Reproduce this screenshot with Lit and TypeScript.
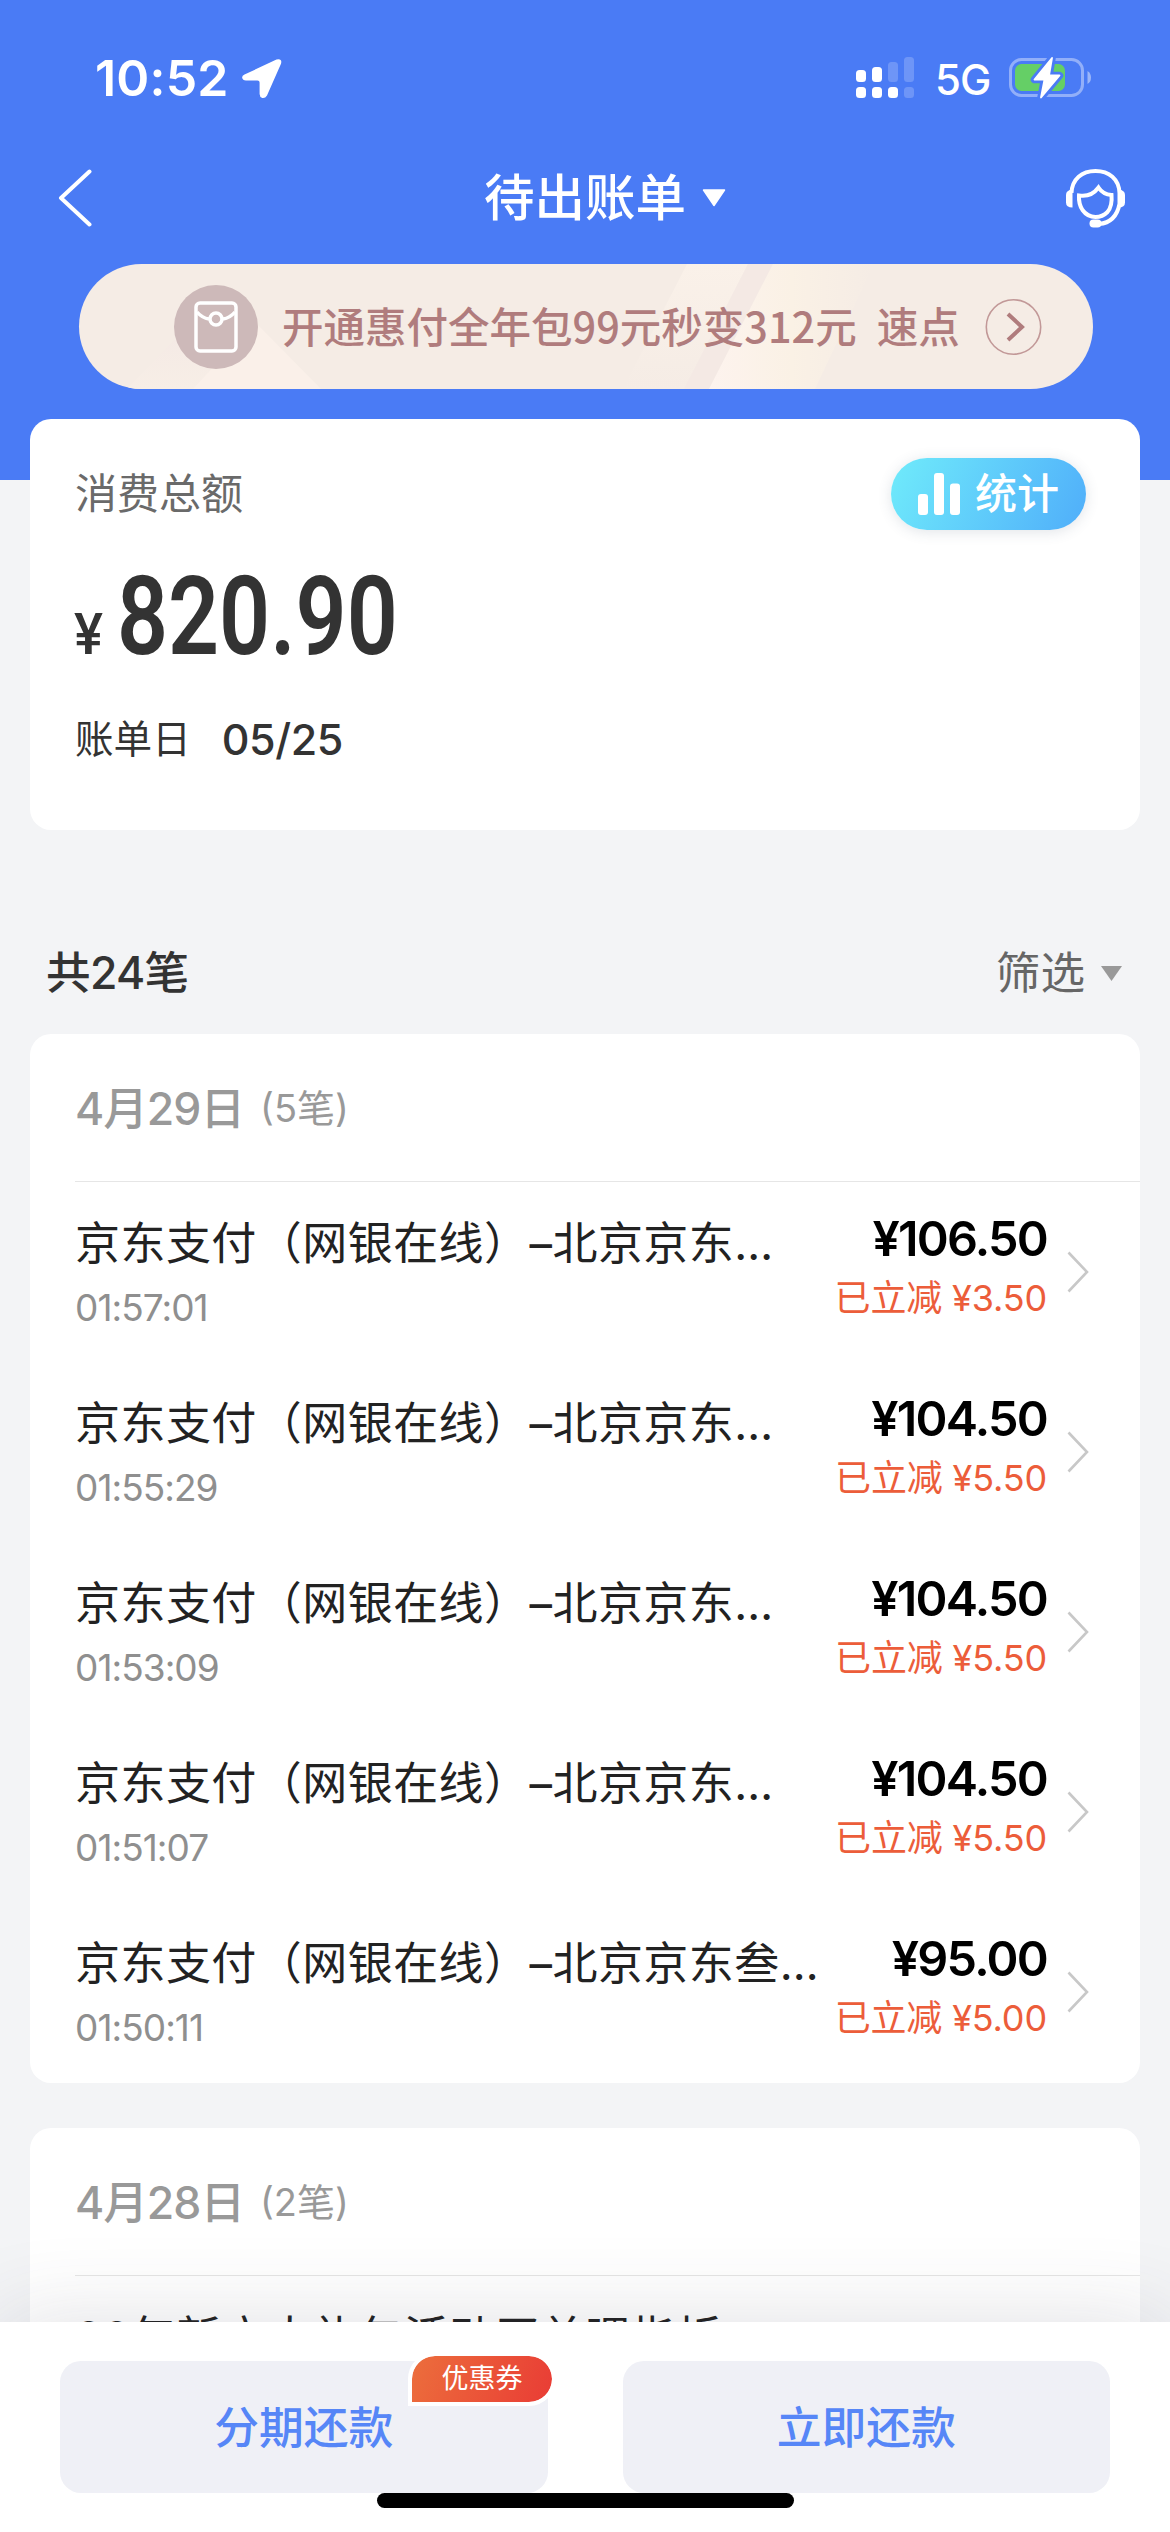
import { LitElement, html, css } from "lit";
import { customElement } from "lit/decorators.js";

interface Bill { title: string; time: string; amount: string; off: string; }
interface Day { date: string; count: string; bills: Bill[]; }

const T1 = "京东支付（网银在线）–北京京东…";
const DAYS: Day[] = [
  {
    date: "4月29日", count: "(5笔)", bills: [
      { title: T1, time: "01:57:01", amount: "¥106.50", off: "¥3.50" },
      { title: T1, time: "01:55:29", amount: "¥104.50", off: "¥5.50" },
      { title: T1, time: "01:53:09", amount: "¥104.50", off: "¥5.50" },
      { title: T1, time: "01:51:07", amount: "¥104.50", off: "¥5.50" },
      { title: "京东支付（网银在线）–北京京东叁…", time: "01:50:11", amount: "¥95.00", off: "¥5.00" },
    ],
  },
  { date: "4月28日", count: "(2笔)", bills: [{ title: "22年新户大礼包活动买单嘿指折", time: "", amount: "", off: "" }] },
];

@customElement("app-root")
export class AppRoot extends LitElement {
  static styles = css`
    :host { display: block; font-family: Inter, "Noto Sans CJK SC", sans-serif; }
    * { box-sizing: border-box; }
    svg { display: block; flex: none; }
    .page { position: relative; width: 1170px; height: 2532px; overflow: hidden; background: #f3f4f6; display: flex; flex-direction: column; }
    .hero { height: 480px; background: #4a7bf5; flex: none; }
    .status { height: 155px; padding: 57px 78px 0 95px; display: flex; align-items: flex-start; color: #fff; }
    .clock { font-size: 50px; line-height: 42px; font-weight: 600; width: 147px; white-space: nowrap; letter-spacing: 0.2px; }
    .grow { flex: 1; }
    .net { font-size: 42px; line-height: 45px; font-weight: 500; width: 94px; padding-left: 20px; letter-spacing: -1px; white-space: nowrap; }
    .nav { height: 109px; display: flex; align-items: center; padding: 0 45px 24px 57px; color: #fff; justify-content: space-between; }
    .navtitle { display: flex; align-items: center; gap: 16px; font-size: 50.5px; font-weight: 500; line-height: 60px; margin-left: 51px; }
    .banner { height: 125px; width: 1014px; margin-left: 79px; border-radius: 63px; background: #f5ece5; position: relative; overflow: hidden; display: flex; align-items: center; padding-left: 95px; color: #b07c7d; }
    .shine { position: absolute; left: 0; top: 0; }
    .seal { width: 84px; height: 84px; border-radius: 50%; background: #cdb9b9; display: flex; align-items: center; justify-content: center; position: relative; }
    .promo { position: relative; font-family: "Noto Sans CJK SC", sans-serif; font-weight: 500; font-size: 41.5px; line-height: 60px; margin: 0 0 4px 24px; white-space: pre; width: 703px; }
    .promo .tail { margin-left: 20px; }
    .ring { position: relative; }
    .card { background: #fff; border-radius: 21px; width: 1110px; margin-left: 30px; flex: none; }
    .summary { height: 411px; margin-top: -61px; padding: 39px 54px 0 45px; }
    .row { display: flex; align-items: center; justify-content: space-between; }
    .label { font-size: 42px; line-height: 72px; color: #6a6a6a; font-weight: 400; }
    .stats { width: 195px; height: 72px; border-radius: 36px; background: linear-gradient(115deg, #6ee8fb 5%, #50affa 98%); box-shadow: 0 2px 14px rgba(70, 90, 110, .16); display: flex; align-items: center; padding-left: 27px; gap: 15px; color: #fff; font-size: 42px; font-weight: 500; line-height: 60px; }
    .total { display: flex; align-items: baseline; color: #333; height: 130px; margin-top: 22px; font-family: Roboto, sans-serif; line-height: 130px; }
    .yen { font-size: 58px; font-weight: 500; width: 43px; transform: scaleX(.94); transform-origin: 0 50%; margin-left: -1px; }
    .sum { font-size: 109px; font-weight: 600; transform: scaleX(.82); transform-origin: 0 50%; white-space: nowrap; }
    .due { display: flex; align-items: center; color: #333; font-size: 38.6px; line-height: 50px; margin-top: 32px; }
    .due b { font-size: 43px; font-weight: 500; margin-left: 31px; letter-spacing: -.4px; }
    .listhead { height: 204px; padding: 79px 48px 0 46px; display: flex; justify-content: space-between; align-items: flex-start; font-size: 44.6px; line-height: 128px; color: #333; font-weight: 500; flex: none; }
    .countall { letter-spacing: -.7px; }
    .filter { display: flex; align-items: center; gap: 16px; color: #666; font-weight: 400; }
    .day { padding-left: 45px; margin-bottom: 45px; }
    .dayhead { height: 148px; border-bottom: 1px solid #e6e6e6; display: flex; align-items: center; gap: 16px; color: #999; font-size: 44.6px; font-weight: 500; letter-spacing: -1px; padding-bottom: 5px; }
    .dayhead span { font-size: 38px; font-weight: 400; letter-spacing: 0; }
    .bills { height: 901px; }
    .bill { height: 180px; padding: 31px 51px 0 0; display: flex; color: #222; }
    .left { flex: 1; min-width: 0; }
    .name { font-size: 45px; line-height: 62px; white-space: nowrap; letter-spacing: .45px; }
    .time { font-size: 37px; line-height: 44px; margin-top: 11px; color: #8f8f8f; font-weight: 400; letter-spacing: -.95px; }
    .right { flex: none; text-align: right; margin: -2px 20px 0 0; white-space: nowrap; }
    .amt { font-size: 48.5px; line-height: 56px; font-weight: 600; color: #000; letter-spacing: -1.75px; }
    .off { font-size: 36px; line-height: 46px; margin-top: 8px; color: #ec5d3a; letter-spacing: -.15px; }
    .go { margin-top: 38px; }
    .footer { position: absolute; left: 0; top: 2322px; width: 1170px; height: 210px; background: #fff; box-shadow: 0 0 90px rgba(60, 65, 80, .16); display: flex; gap: 75px; padding: 39px 60px 0; }
    .btn { position: relative; flex: 1; height: 132px; border-radius: 21px; background: #eff0f6; color: #5686f7; font-size: 44.8px; font-weight: 500; line-height: 134px; text-align: center; }
    .badge { position: absolute; left: 348px; top: -9px; width: 148px; height: 54px; border: 4px solid #fff; border-radius: 27px 27px 27px 0; background: linear-gradient(110deg, #ec6e3c, #e93c35) padding-box; color: #fff; font-size: 27px; font-weight: 400; line-height: 46px; }
    .home { position: absolute; left: 377px; top: 2493px; width: 417px; height: 15px; border-radius: 8px; background: #000; }
  `;

  private statusBar() {
    return html`<div class="status">
      <div class="clock">10:52</div>
      <svg width="40" height="42" viewBox="0 0 40 42"><path d="M2.5 17.6 34.5 2.4Q40.5 1 39 6.800L25 38.500Q23.200 41.500 20.300 41 17.600 40 17.600 37V25.500Q17.600 23.500 15.500 23.500H4Q.6 23.300.1 20.500.1 18.800 2.500 17.600Z" fill="#fff"/></svg>
      <div class="grow"></div>
      <svg width="59" height="42" viewBox="0 0 59 42"><g fill="#fff">
        <rect x="0" y="13" width="10" height="12" rx="3.500"/><rect x="16" y="10" width="10" height="15" rx="3.500"/>
        <rect x="0" y="30" width="10" height="11" rx="3.500"/><rect x="16" y="30" width="10" height="11" rx="3.500"/><rect x="32" y="30" width="10" height="11" rx="3.500"/></g>
        <g fill="#fff" opacity=".2"><rect x="32" y="5" width="10" height="20" rx="3.500"/><rect x="48" y="0" width="10" height="25" rx="3.500"/><rect x="48" y="30" width="10" height="11" rx="3.500"/></g></svg>
      <div class="net">5G</div>
      <svg width="83" height="42" viewBox="0 0 83 42">
        <rect x="1.500" y="2.500" width="72" height="36" rx="11" fill="none" stroke="#fff" stroke-opacity=".4" stroke-width="3"/>
        <path d="M78.500 14q3.500 2 3.500 6.500t-3.500 6.500z" fill="#fff" opacity=".45"/>
        <rect x="6" y="7" width="50" height="27" rx="6.500" fill="#65cf66"/>
        <path d="M43 1 25.500 22.500h10L32 40.500 50.500 18.500H40z" fill="#fff" stroke="#4a7bf5" stroke-width="7.500" stroke-linejoin="round"/>
        <path d="M43 1 25.500 22.500h10L32 40.500 50.500 18.500H40z" fill="#fff" stroke="#fff" stroke-width="1.800" stroke-linejoin="round"/>
      </svg>
    </div>`;
  }

  private nav() {
    return html`<div class="nav">
      <svg width="36" height="58" viewBox="0 0 36 58"><path d="M32.500 2.500 4 29l28.500 26.500" fill="none" stroke="#fff" stroke-width="4" stroke-linecap="round" stroke-linejoin="round"/></svg>
      <div class="navtitle"><span>待出账单</span><svg width="24" height="18" viewBox="0 0 24 18"><path d="M1.500 1h21L12 16.500z" fill="#fff" stroke="#fff" stroke-width="1.500" stroke-linejoin="round"/></svg></div>
      <svg width="59" height="60" viewBox="0 0 59 60" fill="none" stroke="#fff" stroke-width="4">
        <path d="M5.500 25C6 11 16 3 29.500 3S53 11 53.500 25v11C51 49 44 55 33 56"/>
        <path d="M6.500 21.500Q0 22 0 27v7.500q0 5 6.500 5zM52.500 21.500Q59 22 59 27v7.500q0 5-6.500 5z" fill="#fff" stroke="none"/>
        <path d="M13 27.500q12 2 19.500-8Q37 26.500 45.500 27q1 11-4 17-5 5-12 5-8 0-13-7-4-6-3.500-14.500Z"/>
        <rect x="23.500" y="51.500" width="12" height="8" rx="4" fill="#fff" stroke="none"/>
      </svg>
    </div>`;
  }

  private banner() {
    return html`<div class="banner">
      <svg class="shine" width="1014" height="125" viewBox="0 0 1014 125">
        <defs>
          <linearGradient id="s1" x1="0" x2="1"><stop offset="0" stop-color="#fdf3ee"/><stop offset=".5" stop-color="#faf1e5"/><stop offset="1" stop-color="#f5ece5"/></linearGradient>
          <linearGradient id="s2" x1="0" x2="0" y1="0" y2="1"><stop offset="0" stop-color="#faf1e9"/><stop offset="1" stop-color="#f5ece5"/></linearGradient>
          <linearGradient id="s3" x1="0" x2="0" y1="0" y2="1"><stop offset="0" stop-color="#f4e9e5"/><stop offset="1" stop-color="#f7eee6"/></linearGradient>
        </defs>
        <path d="M180 62 240 125H48L95 76Z" fill="url(#s3)"/>
        <path d="M176 58 242 125H114Z" fill="#faf0e9"/>
        <path d="M608 0h61l-64 125h-61z" fill="url(#s2)"/>
        <path d="M669 0h25l-64 125h-25z" fill="#f4e9e4"/>
        <path d="M694 0H795L736 125H630Z" fill="url(#s1)"/>
      </svg>
      <div class="seal"><svg width="44" height="52" viewBox="0 0 44 52" fill="none" stroke="#fff" stroke-width="3.500"><rect x="2" y="2" width="40" height="48" rx="4"/><path d="M3 11q5 6 12 7M41 11q-5 6-12 7"/><circle cx="22" cy="18" r="6"/></svg></div>
      <div class="promo">开通惠付全年包99元秒变312元<span class="tail">速点</span></div>
      <svg class="ring" width="57" height="58" viewBox="0 0 57 58" fill="none" stroke="#b07c7d"><circle cx="28.500" cy="29" r="27.200" stroke-width="1.600" opacity=".75"/><path d="m23 16 14 13-14 13" stroke-width="4"/></svg>
    </div>`;
  }

  private bill(b: Bill) {
    return html`<div class="bill">
      <div class="left"><div class="name">${b.title}</div><div class="time">${b.time}</div></div>
      ${b.amount ? html`<div class="right"><div class="amt">${b.amount}</div><div class="off">已立减 ${b.off}</div></div>
      <svg class="go" width="22" height="42" viewBox="0 0 22 42"><path d="M1.500 1.500 20 21 1.500 40.500" fill="none" stroke="#c8c8c8" stroke-width="2.600"/></svg>` : ""}
    </div>`;
  }

  render() {
    return html`<div class="page">
      <div class="hero">${this.statusBar()}${this.nav()}${this.banner()}</div>
      <div class="card summary">
        <div class="row"><div class="label">消费总额</div>
          <div class="stats"><svg width="42" height="42" viewBox="0 0 42 42" fill="#fff"><rect x="0" y="21" width="10" height="21" rx="3"/><rect x="16" y="0" width="10" height="42" rx="3"/><rect x="32" y="10.500" width="10" height="31.500" rx="3"/></svg><span>统计</span></div></div>
        <div class="total"><span class="yen">¥</span><span class="sum">820.90</span></div>
        <div class="due"><span>账单日</span><b>05/25</b></div>
      </div>
      <div class="listhead"><div class="countall">共24笔</div><div class="filter"><span>筛选</span><svg width="21" height="15" viewBox="0 0 21 15"><path d="M0 0h21L10.500 15z" fill="#999"/></svg></div></div>
      ${DAYS.map((d) => html`<div class="card day"><div class="dayhead">${d.date}<span>${d.count}</span></div><div class="bills">${d.bills.map((b) => this.bill(b))}</div></div>`)}
      <div class="footer">
        <div class="btn">分期还款<div class="badge">优惠券</div></div>
        <div class="btn">立即还款</div>
      </div>
      <div class="home"></div>
    </div>`;
  }
}
